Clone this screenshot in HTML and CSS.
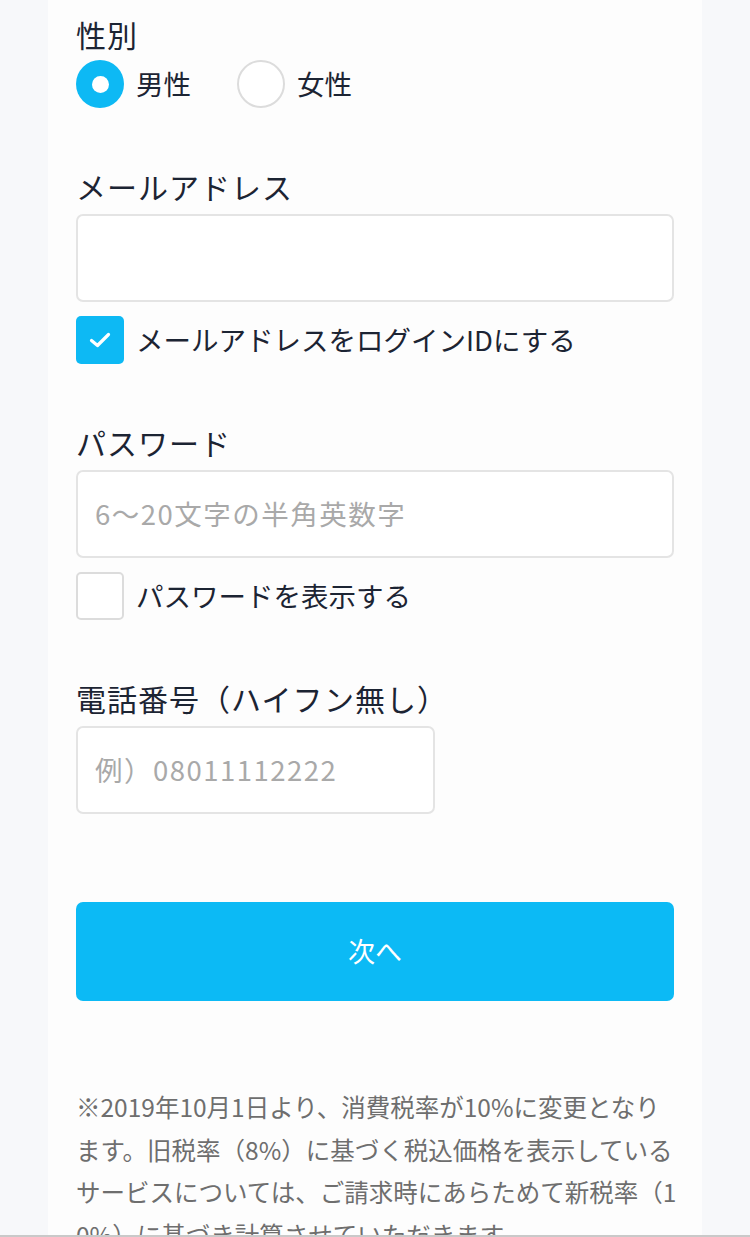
FILE: index.html
```html
<!DOCTYPE html>
<html lang="ja">
<head>
<meta charset="utf-8">
<link rel="stylesheet" href="styles.css">
</head>
<body>
<div class="page">
  <div class="card">
    <div class="label first">性別</div>
    <div class="radios">
      <label class="opt"><span class="radio checked"></span><span class="opt-text">男性</span></label>
      <label class="opt"><span class="radio"></span><span class="opt-text">女性</span></label>
    </div>

    <div class="label">メールアドレス</div>
    <div class="input"></div>
    <label class="check-row"><span class="checkbox checked"><svg width="22" height="16" viewBox="0 0 22 16"><path d="M2.5 8.5 L8.5 13.5 L19.5 2.5" fill="none" stroke="#fff" stroke-width="3.2" stroke-linecap="round" stroke-linejoin="round"/></svg></span><span class="opt-text">メールアドレスをログインIDにする</span></label>

    <div class="label">パスワード</div>
    <div class="input"><span class="ph">6〜20文字の半角英数字</span></div>
    <label class="check-row"><span class="checkbox"></span><span class="opt-text">パスワードを表示する</span></label>

    <div class="label">電話番号（ハイフン無し）</div>
    <div class="input short"><span class="ph">例）08011112222</span></div>

    <button class="btn">次へ</button>

    <p class="note">※2019年10月1日より、消費税率が10%に変更となり<br>ます。旧税率（8%）に基づく税込価格を表示している<br>サービスについては、ご請求時にあらためて新税率（1<br>0%）に基づき計算させていただきます。</p>
  </div>
</div>
<div class="bottom-line"></div>
</body>
</html>
```

FILE: styles.css
```css
* { box-sizing: border-box; }
html, body {
  margin: 0;
  padding: 0;
  background: #f7f8fa;
}
body {
  font-family: "Noto Sans CJK JP", "Noto Sans", sans-serif;
  color: #1c2433;
  height: 1237px;
  overflow: hidden;
}
.page {
  display: flex;
  justify-content: center;
}
.card {
  width: 654px;
  background: #fdfdfd;
  padding: 16px 28px 0 28px;
  display: flex;
  flex-direction: column;
  min-height: 1300px;
}
.label {
  font-size: 30px;
  letter-spacing: 1px;
  line-height: 36px;
  height: 40px;
  padding-bottom: 4px;
  margin-top: 60px;
  margin-bottom: 6px;
  white-space: nowrap;
}
.label.first {
  margin-top: 0;
  margin-bottom: 4px;
}
.radios {
  display: flex;
  gap: 46px;
  height: 48px;
}
.opt {
  display: flex;
  align-items: center;
  gap: 12px;
}
.opt-text {
  font-size: 27.5px;
  line-height: 46px;
  padding-bottom: 2px;
  white-space: nowrap;
}
.radio {
  width: 48px;
  height: 48px;
  border-radius: 50%;
  border: 2px solid #dcdcdc;
  background: #fff;
  display: flex;
  align-items: center;
  justify-content: center;
}
.radio.checked {
  border: none;
  background: #0db9f4;
}
.radio.checked::after {
  content: "";
  width: 17px;
  height: 17px;
  border-radius: 50%;
  background: #fff;
}
.input {
  height: 88px;
  border: 2px solid #e4e4e4;
  border-radius: 7px;
  background: #fff;
  display: flex;
  align-items: center;
  padding-left: 17px;
  padding-bottom: 3px;
}
.input.short {
  width: 359px;
}
.ph {
  font-size: 27.5px;
  letter-spacing: 1.5px;
  color: #a9a9a9;
  white-space: nowrap;
}
.check-row {
  display: flex;
  align-items: center;
  gap: 12px;
  margin-top: 14px;
  height: 48px;
}
.checkbox {
  width: 48px;
  height: 48px;
  border: 2px solid #dcdcdc;
  border-radius: 5px;
  background: #fff;
  display: flex;
  align-items: center;
  justify-content: center;
}
.checkbox.checked {
  border: none;
  background: #0db9f4;
}
.btn {
  margin-top: 88px;
  height: 99px;
  width: 100%;
  border: none;
  border-radius: 7px;
  background: #0cbaf5;
  color: #fff;
  font-family: inherit;
  font-size: 27px;
  padding: 0 0 3px 0;
}
.note {
  margin: 85px 0 0 0;
  font-size: 24.5px;
  line-height: 42.5px;
  color: #6e6e6e;
  white-space: nowrap;
}
.bottom-line {
  position: fixed;
  left: 0;
  right: 0;
  bottom: 0;
  height: 2px;
  background: #c9c9c9;
}
```
